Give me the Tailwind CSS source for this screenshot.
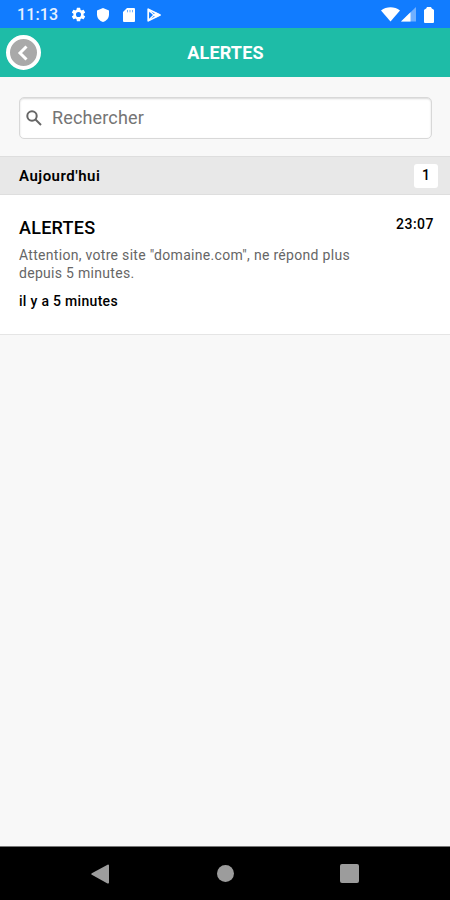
<!DOCTYPE html>
<html lang="fr">
<head>
<meta charset="utf-8">
<meta name="viewport" content="width=device-width">
<title>Alertes</title>
<script src="https://cdn.jsdelivr.net/npm/@tailwindcss/browser@4"></script>
</head>
<body class="flex flex-col w-[450px] h-[900px] overflow-hidden bg-[#f8f8f8] font-[Roboto,sans-serif] text-black">
  <div class="flex items-center h-7 shrink-0 bg-[#117cff] pl-[17px] pr-4 pt-[2px] text-white">
    <span class="w-[53px] text-base leading-5 font-medium tracking-[0.1px] whitespace-nowrap text-white/90">11:13</span>
    <svg class="size-[17px] -mt-[1px]" viewBox="0 0 24 24" fill="currentColor"><path d="M19.14 12.94c.04-.3.06-.61.06-.94s-.02-.64-.07-.94l2.03-1.58a.5.5 0 0 0 .12-.61l-1.92-3.32a.5.5 0 0 0-.59-.22l-2.39.96a7 7 0 0 0-1.62-.94L14.4 2.81a.5.5 0 0 0-.48-.41h-3.84a.5.5 0 0 0-.47.41l-.36 2.54a7.300 7.300 0 0 0-1.620.94l-2.390-.96a.5.5 0 0 0-.59.22L2.740 8.870a.5.5 0 0 0 .12.61l2.030 1.580a6 6 0 0 0 0 1.880l-2.030 1.580a.5.5 0 0 0-.12.61l1.920 3.320c.12.22.37.29.59.22l2.390-.96c.5.38 1.030.7 1.620.94l.36 2.540c.05.24.24.41.48.41h3.840c.24 0 .44-.17.47-.41l.36-2.540a7 7 0 0 0 1.620-.94l2.390.96c.22.08.47 0 .59-.22l1.920-3.320a.5.5 0 0 0-.12-.61zM12 15.600a3.600 3.600 0 1 1 0-7.200 3.600 3.600 0 0 1 0 7.200z"/></svg>
    <svg class="w-3 h-[14px] ml-[10px] -mt-[1px]" viewBox="0 0 12 14" fill="currentColor"><path d="M6 0 0 2.500v4C0 10 2.500 13 6 14c3.500-1 6-4 6-7.500v-4z"/></svg>
    <svg class="w-[12px] h-[14px] ml-[14px] -mt-[1px]" viewBox="0 0 12 14" fill="currentColor"><path d="M4 0h7a1 1 0 0 1 1 1v12a1 1 0 0 1-1 1H1a1 1 0 0 1-1-1V4z"/><path stroke="#117cff" stroke-opacity=".6" d="M4.500 2v2.300M7 2v2.300M9.500 2v2.300"/></svg>
    <svg class="w-[14px] h-[14px] ml-3 -mt-[1px]" viewBox="0 0 14 14" fill="none" stroke="currentColor" stroke-linejoin="round"><path stroke-width="1.700" d="M1.200 1.200v11.600L13 7z"/><path stroke-width="1.200" d="M1.200 1.500 9 9M1.200 12.500 9 5"/><path fill="currentColor" stroke="none" d="M9 4.600 13.800 7 9 9.400 6.500 7zM1 1l3.500 1.500L3 5z"/></svg>
    <svg class="w-[19px] h-[15px] ml-auto -mt-[1px]" viewBox="0 0 19 15" fill="currentColor"><path d="M0 3.500C5.500-.8 13.500-.8 19 3.500L9.500 14.500z"/></svg>
    <svg class="w-[15px] h-[15px] ml-[1px] -mt-[1px]" viewBox="0 0 15 15" fill="currentColor"><path opacity=".4" d="M15 0v14.500H0z"/><path d="M9.500 5.300v9.200H0z"/></svg>
    <svg class="w-[10px] h-[16px] ml-[8px] -mt-[1px]" viewBox="0 0 10 16" fill="currentColor"><path d="M3 0h4l.8 1.600L9.500 2.400Q10 2.700 10 3.300V15a1 1 0 0 1-1 1H1a1 1 0 0 1-1-1V3.300Q0 2.700.5 2.400L2.200 1.600z"/></svg>
  </div>

  <header class="grid grid-cols-[42px_1fr_42px] items-center h-[49px] shrink-0 bg-[#1ebca7] pl-[6px] pr-[5px]">
    <button class="flex items-center justify-center size-[35px] rounded-full border-[4.500px] border-white bg-[#a9a9a9]" aria-label="Retour">
      <svg class="size-[18px] -ml-[1px]" viewBox="0 0 18 18" fill="none" stroke="white" stroke-width="3"><path d="M12.500 2.500 6 9l6.500 6.500"/></svg>
    </button>
    <h1 class="text-center text-lg leading-6 font-bold text-white tracking-[0.15px]">ALERTES</h1>
  </header>

  <div class="h-[79px] shrink-0 pt-5 pl-[19px] pr-[18px]">
    <div class="flex items-center h-[42px] rounded-[5px] border border-[#d8d8d8] bg-white pl-[6px] shadow-[inset_0_1px_2px_rgba(0,0,0,0.15)]">
      <svg class="size-4" viewBox="0 0 16 16" fill="none" stroke="#666" stroke-width="2"><circle cx="6" cy="6" r="4.700"/><path d="m9.500 9.500 5.500 5.500"/></svg>
      <span class="ml-[10px] text-lg leading-6 text-[#757575] tracking-[0.15px]">Rechercher</span>
    </div>
  </div>

  <div class="flex items-center justify-between h-[39px] shrink-0 border-y border-[#dedede] bg-[#e8e8e8] pl-[19px] pr-[12px]">
    <h2 class="text-[15px] leading-5 font-semibold tracking-[0.5px]">Aujourd'hui</h2>
    <span class="flex items-center justify-center w-6 h-6 rounded-[3px] bg-white pb-[2px] text-sm font-medium">1</span>
  </div>

  <article class="flex justify-between h-[140px] shrink-0 border-b border-[#e5e5e5] bg-white pl-[19px] pr-4 pt-[21px]">
    <div>
      <h3 class="text-lg leading-6 font-medium tracking-[0.25px]">ALERTES</h3>
      <p class="mt-[6px] text-sm leading-[18px] text-[#666] tracking-[0.3px] whitespace-nowrap">Attention, votre site "domaine.com", ne répond plus<br>depuis 5 minutes.</p>
      <p class="mt-[10px] text-sm leading-[18px] font-medium tracking-[0.3px]">il y a 5 minutes</p>
    </div>
    <time class="mt-[-2px] text-sm leading-5 font-medium tracking-[0.5px]">23:07</time>
  </article>

  <nav class="flex items-center h-[54px] mt-auto shrink-0 border-t border-[#777] bg-black pl-[91px] text-[#9c9c9c]">
    <svg class="w-[18px] h-5" viewBox="0 0 18 20" fill="currentColor"><path d="M17 .5a1 1 0 0 1 1 1v17a1 1 0 0 1-1.500.9L.8 10.800a1 1 0 0 1 0-1.600z"/></svg>
    <div class="size-[17px] rounded-full bg-current ml-[108px]"></div>
    <div class="size-[19px] rounded-[2px] bg-current ml-[106px]"></div>
  </nav>
</body>
</html>
